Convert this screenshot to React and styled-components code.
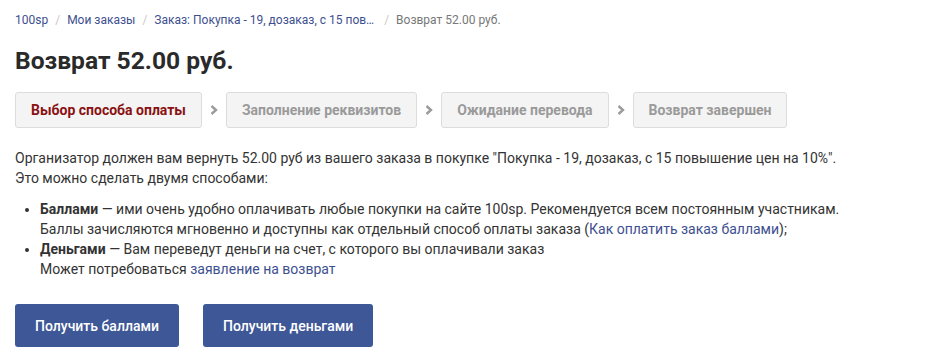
import React from "react";
import styled, { createGlobalStyle } from "styled-components";

const Global = createGlobalStyle`
  html, body { margin: 0; padding: 0; background: #fff; }
  body { font-family: Roboto, "Noto Sans", Arial, sans-serif; color: #333; }
`;

const Page = styled.div`
  padding: 12px 15px;
  display: flex;
  flex-direction: column;
  align-items: flex-start;
`;

const Crumbs = styled.nav`
  display: flex;
  align-items: center;
  font-size: 12px;
  line-height: 16px;
`;

const Crumb = styled.a`
  color: ${(p) => (p.$current ? "#777" : "#3d4f8f")};
  text-decoration: none;
  white-space: nowrap;
  margin-right: ${(p) => p.$gap || "0"};
`;

const Sep = styled.span`
  color: #c8c8c8;
  padding: 0 7px;
`;

const Title = styled.h1`
  margin: 18px 0 0;
  font-size: 24.6px;
  line-height: 30px;
  font-weight: 700;
  color: #2a2a2a;
`;

const Steps = styled.div`
  margin-top: 16px;
  display: flex;
  align-items: center;
`;

const Step = styled.div`
  background: #f4f4f4;
  border: 1px solid #dcdcdc;
  border-radius: 3px;
  padding: 7px 15px;
  font-size: 14px;
  line-height: 20px;
  font-weight: 700;
  color: ${(p) => (p.$active ? "#8a1111" : "#9a9a9a")};
`;

const Arrow = styled.svg`
  width: 8px;
  height: 10px;
  margin: 0 8px;
  flex: none;
`;

const Text = styled.p`
  margin: 20px 0 0;
  font-size: 14px;
  line-height: 20px;
`;

const List = styled.ul`
  margin: 11px 0 0;
  padding-left: 25px;
  font-size: 14px;
  line-height: 20px;
`;

const Link = styled.a`
  color: #3d4f8f;
  text-decoration: none;
`;

const Buttons = styled.div`
  margin-top: 25px;
  display: flex;
  gap: 24px;
`;

const Button = styled.button`
  height: 43px;
  padding: 0 20px;
  border: none;
  border-radius: 3px;
  background: #3d5797;
  color: #fff;
  font-family: Roboto, "Noto Sans", Arial, sans-serif;
  font-size: 14px;
  font-weight: 500;
  cursor: pointer;
`;

const Chevron = () => (
  <Arrow viewBox="0 0 8 10">
    <path d="M1.5 1 L6 5 L1.5 9" fill="none" stroke="#9b9b9b" strokeWidth="2.4" />
  </Arrow>
);

const steps = ["Выбор способа оплаты", "Заполнение реквизитов", "Ожидание перевода", "Возврат завершен"];

export default function App() {
  return (
    <Page>
      <Global />
      <Crumbs>
        <Crumb href="#">100sp</Crumb>
        <Sep>/</Sep>
        <Crumb href="#">Мои заказы</Crumb>
        <Sep>/</Sep>
        <Crumb href="#" $gap="3px">Заказ: Покупка - 19, дозаказ, с 15 пов…</Crumb>
        <Sep>/</Sep>
        <Crumb $current>Возврат 52.00 руб.</Crumb>
      </Crumbs>
      <Title>Возврат 52.00 руб.</Title>
      <Steps>
        {steps.map((s, i) => (
          <React.Fragment key={s}>
            {i > 0 && <Chevron />}
            <Step $active={i === 0}>{s}</Step>
          </React.Fragment>
        ))}
      </Steps>
      <Text>
        Организатор должен вам вернуть 52.00 руб из вашего заказа в покупке "Покупка - 19, дозаказ, с 15 повышение цен на 10%".
        <br />
        Это можно сделать двумя способами:
      </Text>
      <List>
        <li>
          <b>Баллами</b> — ими очень удобно оплачивать любые покупки на сайте 100sp. Рекомендуется всем постоянным участникам.
          <br />
          Баллы зачисляются мгновенно и доступны как отдельный способ оплаты заказа (<Link href="#">Как оплатить заказ баллами</Link>);
        </li>
        <li>
          <b>Деньгами</b> — Вам переведут деньги на счет, с которого вы оплачивали заказ
          <br />
          Может потребоваться <Link href="#">заявление на возврат</Link>
        </li>
      </List>
      <Buttons>
        <Button>Получить баллами</Button>
        <Button>Получить деньгами</Button>
      </Buttons>
    </Page>
  );
}
